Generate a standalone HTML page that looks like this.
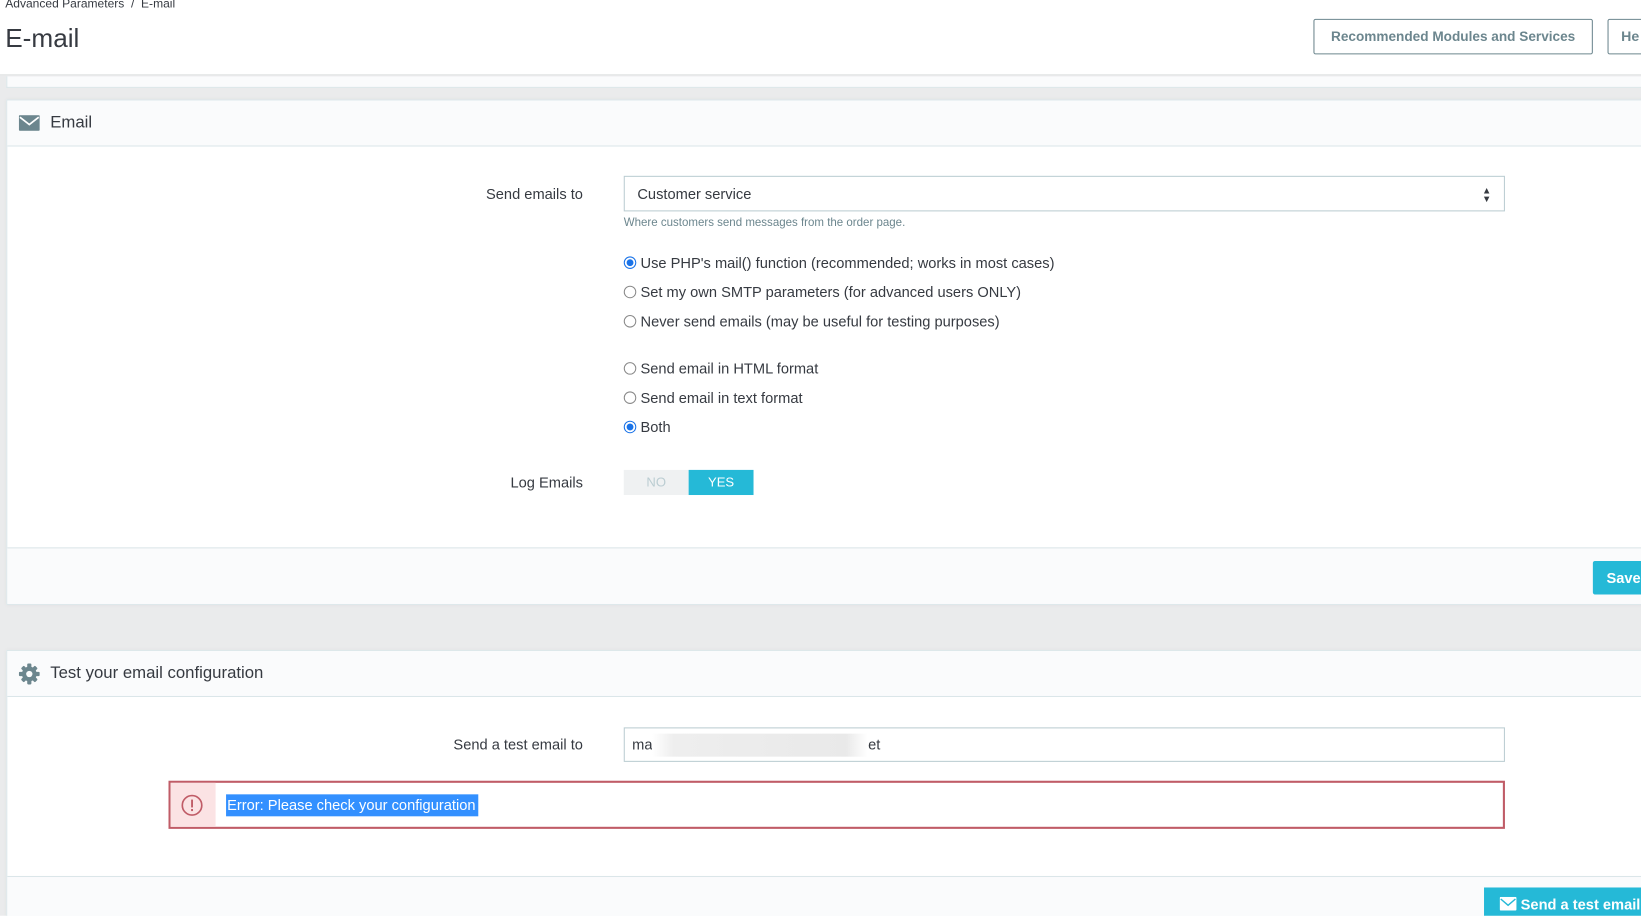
<!DOCTYPE html>
<html><head><meta charset="utf-8"><style>
*{box-sizing:border-box;margin:0;padding:0}
html,body{width:1641px;height:915px;overflow:hidden;background:#fff}
#w{position:absolute;left:0;top:0;width:1568px;height:875px;transform:scale(1.04656);transform-origin:0 0;font-family:"Liberation Sans",sans-serif;color:#363a41;background:#eaebec;overflow:hidden}
.a{position:absolute}
.hdr{left:0;top:0;width:1568px;height:72px;background:#fff;border-bottom:1px solid #dde0e1}
.btn{border:1px solid #6c868e;color:#6c868e;font-size:13.5px;font-weight:bold;background:#fff;height:34px;line-height:32px;padding:0 12px;border-radius:2px;white-space:nowrap;overflow:hidden}
.panel{left:6px;width:1570px;background:#fff;border:1px solid #dbe6e9;box-shadow:0 0 4px rgba(0,0,0,.05)}
.ph{position:absolute;left:0;top:0;right:0;height:44px;background:#fafbfc;border-bottom:1px solid #dbe6e9;font-size:16px;line-height:44px;padding-left:41px}
.pf{position:absolute;left:0;right:0;bottom:0;background:#fafbfc;border-top:1px solid #dbe6e9}
.lbl{font-size:14px;text-align:right;width:300px;color:#363a41}
.rad{font-size:14px;left:596px;line-height:16px;white-space:nowrap}
.rad i{display:inline-block;width:12px;height:12px;border:1px solid #8a8a8a;border-radius:50%;vertical-align:-1px;margin-right:4px;background:#fff}
.rad i.on{border:1px solid #1a73e8;background:radial-gradient(circle,#1a73e8 0 3px,#fff 3.5px)}
.inp{border:1px solid #bbcdd2;background:#fff;font-size:14px;color:#363a41}
.blue{background:#25b9d7;color:#fff;font-weight:bold;font-size:14px;white-space:nowrap}
</style></head><body><div id="w">
<div class="a hdr"></div>
<div class="a" style="left:5px;top:-2px;font-size:11.5px;color:#363a41">Advanced Parameters &nbsp;/&nbsp; E-mail</div>
<div class="a" style="left:5px;top:23px;font-size:25px">E-mail</div>
<div class="a btn" style="left:1255px;top:18px;width:267px;text-align:center;font-size:13px">Recommended Modules and Services</div>
<div class="a btn" style="left:1536px;top:18px;width:60px">He</div>
<div class="a" style="left:6px;top:73px;width:1570px;height:11px;background:#fafbfc;border:1px solid #dbe6e9;border-top:0"></div>

<div class="a panel" style="top:95px;height:483px">
 <div class="ph">Email</div>
 <svg class="a" style="left:11px;top:14px" width="20" height="15" viewBox="0 0 20 15"><rect width="20" height="15" rx="1" fill="#6c868e"/><path d="M1 2l9 7 9-7" stroke="#fff" stroke-width="1.6" fill="none"/></svg>
 <div class="pf" style="height:54px"></div>
 <div class="a blue" style="left:1515px;top:440px;width:60px;height:32px;line-height:32px;padding-left:13px;border-radius:2px">Save</div>
</div>
<div class="a lbl" style="left:257px;top:177px">Send emails to</div>
<div class="a inp" style="left:596px;top:168px;width:842px;height:34px;line-height:32px;padding-left:12px">Customer service<span class="a" style="right:12px;font-size:9px;line-height:8px;top:9px">▲<br>▼</span></div>
<div class="a" style="left:596px;top:207px;font-size:11px;color:#6c868e">Where customers send messages from the order page.</div>
<div class="a rad" style="top:243px"><i class="on"></i>Use PHP's mail() function (recommended; works in most cases)</div>
<div class="a rad" style="top:271px"><i></i>Set my own SMTP parameters (for advanced users ONLY)</div>
<div class="a rad" style="top:299px"><i></i>Never send emails (may be useful for testing purposes)</div>
<div class="a rad" style="top:344px"><i></i>Send email in HTML format</div>
<div class="a rad" style="top:372px"><i></i>Send email in text format</div>
<div class="a rad" style="top:400px"><i class="on"></i>Both</div>
<div class="a lbl" style="left:257px;top:453px">Log Emails</div>
<div class="a" style="left:596px;top:449px;width:62px;height:24px;background:#eff1f2;color:#bbcdd2;font-size:12.5px;text-align:center;line-height:24px">NO</div>
<div class="a" style="left:658px;top:449px;width:62px;height:24px;background:#25b9d7;color:#fff;font-size:12.5px;text-align:center;line-height:24px">YES</div>

<div class="a panel" style="top:621px;height:270px">
 <div class="ph">Test your email configuration</div>
 <svg class="a" style="left:11px;top:12px" width="20" height="20" viewBox="0 0 20 20"><g fill="#6c868e"><circle cx="10" cy="10" r="7"/><rect x="8" y="0" width="4" height="20" rx="1"/><rect x="0" y="8" width="20" height="4" rx="1"/><g transform="rotate(45 10 10)"><rect x="8" y="0.5" width="4" height="19" rx="1"/><rect x="0.5" y="8" width="19" height="4" rx="1"/></g></g><circle cx="10" cy="10" r="3" fill="#fafbfc"/></svg>
 <div class="pf" style="height:55px;top:215px"></div>
 <div class="a blue" style="left:1411px;top:226px;width:160px;height:40px;line-height:32px;padding-left:15px;font-size:14px"><svg width="16" height="13" viewBox="0 0 16 13" style="vertical-align:-1px;margin-right:4px"><rect width="16" height="13" rx="1" fill="#fff"/><path d="M1 2l7 6 7-6" stroke="#25b9d7" stroke-width="1.4" fill="none"/></svg>Send a test email</div>
</div>
<div class="a lbl" style="left:257px;top:703px">Send a test email to</div>
<div class="a inp" style="left:596px;top:695px;width:842px;height:33px;line-height:31px;padding-left:7px;white-space:nowrap">ma<span style="display:inline-block;width:206px;height:22px;vertical-align:middle;background:linear-gradient(90deg,#fff,#eee 10%,#e9e9e9 90%,#fff)"></span>et</div>
<div class="a" style="left:161px;top:746px;width:1277px;height:46px;border:2px solid #c05c67;background:#fff"></div>
<div class="a" style="left:163px;top:748px;width:43px;height:42px;background:#fbe3e4"></div>
<svg class="a" style="left:173px;top:759px" width="21" height="21" viewBox="0 0 21 21"><circle cx="10.5" cy="10.5" r="9.3" fill="none" stroke="#c05c67" stroke-width="1.6"/><rect x="9.6" y="5" width="1.8" height="7.5" fill="#c05c67"/><rect x="9.6" y="14" width="1.8" height="2" fill="#c05c67"/></svg>
<div class="a" style="left:216px;top:759px;height:21px;line-height:21px;padding:0 3px 0 1px;background:#3390ff;color:#fff;font-size:14px;white-space:nowrap">Error: Please check your configuration</div>
</div></body></html>
